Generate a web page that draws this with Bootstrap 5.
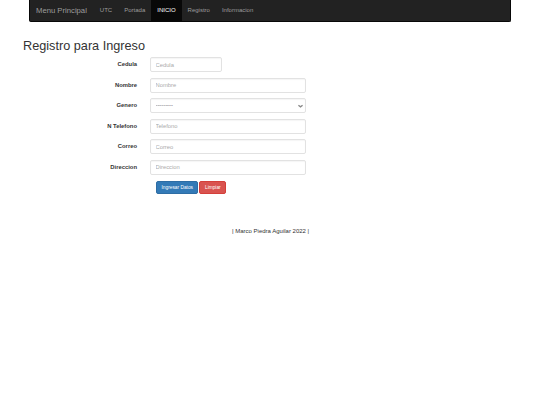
<!DOCTYPE html>
<html lang="es"><head><meta charset="utf-8"><title>Registro</title>
<link href="https://cdn.jsdelivr.net/npm/bootstrap@5.3.0/dist/css/bootstrap.min.css" rel="stylesheet">
<style>
html,body{background:#fff;}
body{font-family:"Liberation Sans",Arial,sans-serif;font-size:6px;color:#333;margin:0;}
.page-wrap{width:482px;margin-left:29px;}
.top-bar{background:#222;border:1px solid #080808;border-top:0;border-radius:0 0 2px 2px;height:22px;padding:0;align-items:stretch;justify-content:flex-start;flex-wrap:nowrap;}
.top-bar .navbar-brand{color:#9d9d9d;font-size:7.7px;line-height:21px;padding:0;margin:0 7px 0 6px;}
.top-bar .navbar-nav{flex-direction:row;}
.top-bar .nav-link{color:#9d9d9d;font-size:6px;line-height:21px;padding:0 6px;height:21px;}
.top-bar .nav-link.active{color:#fff;background:#080808;}
.page-title{font-size:12.7px;font-weight:400;line-height:15px;margin:17px 0 0 23px;color:#333;}
.reg-form{margin-top:3px;}
.form-line{display:flex;align-items:center;height:15px;margin-bottom:5.6px;}
.line-label{width:137px;text-align:right;font-weight:700;font-size:5.85px;margin:0 13px 0 0;color:#333;}
.line-field{width:156px;}
.line-short{width:72px;}
.reg-form .form-control,.reg-form .form-select{font-size:5.8px;height:15px;min-height:15px;padding:0 4.5px;border:1px solid #e2e2e2;border-radius:2px;color:#555;line-height:13px;box-shadow:inset 0 1px 1px rgba(0,0,0,.04);}
.reg-form .form-select{background-image:url("data:image/svg+xml,%3Csvg xmlns='http://www.w3.org/2000/svg' viewBox='0 0 6 4'%3E%3Cpath fill='none' stroke='%23888' stroke-width='1.5' d='M.5 1l2.5 2 2.5-2'/%3E%3C/svg%3E");background-position:right 2px center;background-size:5px 4px;}
.reg-form .form-control::placeholder{color:#aaa;opacity:1;}
.form-btns{display:flex;gap:1px;margin:0 0 0 156px;padding-top:0.4px;}
.form-btns .btn{font-size:4.8px;line-height:8px;padding:2.5px 4.5px;border-radius:2px;height:13px;}
.btn-save{background:#337ab7;border:1px solid #2e6da4;color:#fff;}
.btn-wipe{background:#d9534f;border:1px solid #d43f3a;color:#fff;}
.foot-note{margin:32px 0 0;padding-left:232px;font-size:6px;line-height:10px;color:#333;white-space:nowrap;}
</style></head>
<body>
<div class="page-wrap">
<nav class="navbar top-bar">
<a class="navbar-brand" href="#">Menu Principal</a>
<ul class="navbar-nav">
<li class="nav-item"><a class="nav-link" href="#">UTC</a></li>
<li class="nav-item"><a class="nav-link" href="#">Portada</a></li>
<li class="nav-item"><a class="nav-link active" href="#">INICIO</a></li>
<li class="nav-item"><a class="nav-link" href="#">Registro</a></li>
<li class="nav-item"><a class="nav-link" href="#">Informacion</a></li>
</ul>
</nav>
</div>
<h1 class="page-title">Registro para Ingreso</h1>
<form class="reg-form">
<div class="form-line"><label class="line-label">Cedula</label><div class="line-short"><input class="form-control" placeholder="Cedula"></div></div>
<div class="form-line"><label class="line-label">Nombre</label><div class="line-field"><input class="form-control" placeholder="Nombre"></div></div>
<div class="form-line"><label class="line-label">Genero</label><div class="line-field"><select class="form-select"><option>---------</option></select></div></div>
<div class="form-line"><label class="line-label">N Telefono</label><div class="line-field"><input class="form-control" placeholder="Telefono"></div></div>
<div class="form-line"><label class="line-label">Correo</label><div class="line-field"><input class="form-control" placeholder="Correo"></div></div>
<div class="form-line"><label class="line-label">Direccion</label><div class="line-field"><input class="form-control" placeholder="Direccion"></div></div>
<div class="form-btns"><button type="button" class="btn btn-save">Ingresar Datos</button><button type="button" class="btn btn-wipe">Limpiar</button></div>
</form>
<p class="foot-note">| Marco Piedra Aguilar 2022 |</p>
<script src="https://cdn.jsdelivr.net/npm/bootstrap@5.3.0/dist/js/bootstrap.bundle.min.js"></script>
</body></html>
